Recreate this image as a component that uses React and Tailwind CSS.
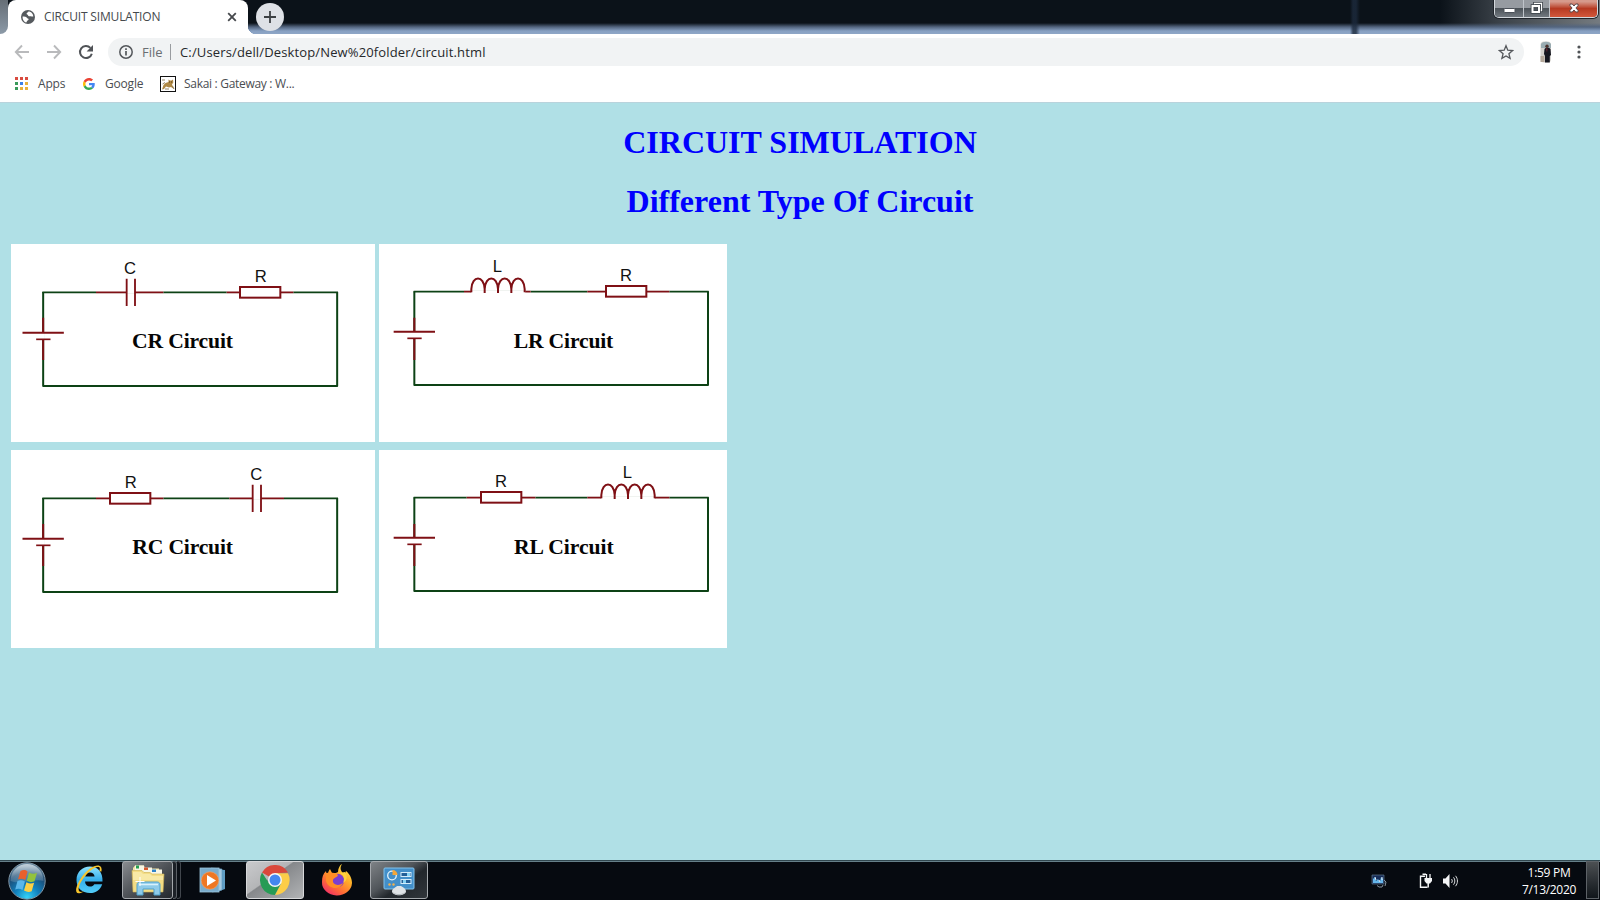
import React from "react";

const WIRE = "#0d4215";
const PART = "#7f1015";

function Frame({ x, top, bottom, right }) {
  return (
    <path d={`M${x} ${top}V${bottom}H${right}V${top}`} fill="none" stroke={WIRE} strokeWidth="6" strokeLinejoin="round" />
  );
}

function Battery({ x, y, top, end }) {
  return (
    <g stroke={PART} fill="none">
      <path d={`M${x} ${y}V${y + 20}`} stroke="#fff" strokeWidth="10" />
      <path d={`M${x} ${top}V${y}M${x} ${y + 20}V${end}`} strokeWidth="6" />
      <path d={`M${x - 62} ${y}H${x + 62}`} strokeWidth="6" />
      <path d={`M${x - 21} ${y + 20}H${x + 22}`} strokeWidth="5" />
    </g>
  );
}

function TopWire({ y, from, to, parts }) {
  return (
    <g fill="none" strokeWidth="5.5">
      <path d={`M${from} ${y}H${to}`} stroke={WIRE} />
      {parts.map(([a, b, c, d]) => (
        <g key={a}>
          <path d={`M${a} ${y}H${d}`} stroke="#fff" strokeWidth="9" />
          <path d={`M${a} ${y}H${b}M${c} ${y}H${d}`} stroke={PART} />
        </g>
      ))}
    </g>
  );
}

function Resistor({ x, y }) {
  return <rect x={x} y={y} width="121" height="32" fill="#fff" stroke={PART} strokeWidth="6" />;
}

function Capacitor({ x, y }) {
  return <path d={`M${x} ${y}v82M${x + 25} ${y}v82`} stroke={PART} strokeWidth="5.5" fill="none" />;
}

function Coil({ x, y }) {
  return (
    <path
      d={`M${x} ${y + 2}v-10c2-42 38-42 40 0v12v-12c2-42 38-42 40 0v12v-12c2-42 38-42 40 0v12v-12c2-42 38-42 40 0v10`}
      stroke={PART}
      strokeWidth="6"
      fill="none"
    />
  );
}

function Name({ x, y, children }) {
  return (
    <text x={x} y={y} textAnchor="middle" fontSize="50" fill="#111" className="font-['Liberation_Sans',Arial,sans-serif]">
      {children}
    </text>
  );
}

function Caption({ x, y, length, children }) {
  return (
    <text
      x={x}
      y={y}
      fontSize="65"
      fontWeight="700"
      textLength={length}
      fill="#050505"
      className="font-['Liberation_Serif','Times_New_Roman',serif]"
    >
      {children}
    </text>
  );
}

function Circuits() {
  return (
    <div className="flex w-[716px] flex-wrap gap-x-[4px] gap-y-[8px]">
      <svg width="364" height="198" viewBox="33 27 1092 594" className="block bg-white">
        <Frame x={129.5} top={171} bottom={453} right={1011.5} />
        <TopWire y={172} from={127} to={1014} parts={[[288, 380, 405, 490], [680, 720, 841, 880]]} />
        <Battery x={129.5} y={293} top={248} end={375} />
        <Capacitor x={380} y={131} />
        <Resistor x={720} y={156} />
        <Name x={390} y={117}>C</Name>
        <Name x={782} y={142}>R</Name>
        <Caption x={396} y={340} length={303}>CR Circuit</Caption>
      </svg>
      <svg width="348" height="198" viewBox="27 27 1044 594" className="block bg-white">
        <Frame x={133} top={169} bottom={450} right={1014} />
        <TopWire y={170} from={131} to={1016} parts={[[282, 304, 466, 482], [652, 708, 828, 898]]} />
        <Battery x={133} y={290} top={248} end={375} />
        <Coil x={304} y={170} />
        <Resistor x={708} y={153} />
        <Name x={382} y={110}>L</Name>
        <Name x={768} y={139}>R</Name>
        <Caption x={431} y={340} length={299}>LR Circuit</Caption>
      </svg>
      <svg width="364" height="198" viewBox="33 30 1092 594" className="block bg-white">
        <Frame x={129.5} top={174} bottom={456} right={1011.5} />
        <TopWire y={175} from={127} to={1014} parts={[[288, 330, 451, 490], [688, 758, 783, 852]]} />
        <Battery x={129.5} y={296} top={252} end={378} />
        <Resistor x={330} y={159} />
        <Capacitor x={758} y={134} />
        <Name x={392} y={145}>R</Name>
        <Name x={769} y={120}>C</Name>
        <Caption x={397} y={343} length={302}>RC Circuit</Caption>
      </svg>
      <svg width="348" height="198" viewBox="27 30 1044 594" className="block bg-white">
        <Frame x={133} top={172} bottom={453} right={1014} />
        <TopWire y={173} from={131} to={1016} parts={[[290, 333, 454, 496], [652, 694, 854, 898]]} />
        <Battery x={133} y={293} top={252} end={378} />
        <Resistor x={333} y={156} />
        <Coil x={694} y={173} />
        <Name x={393} y={142}>R</Name>
        <Name x={772} y={113}>L</Name>
        <Caption x={432} y={343} length={299}>RL Circuit</Caption>
      </svg>
    </div>
  );
}

function WindowControls() {
  return (
    <div className="mr-[2px] flex h-[18px] w-[104px] overflow-hidden rounded-b-[5px] border border-t-0 border-[#d3d8dd] shadow-[0_0_0_1px_#20252b]">
      <div className="flex w-[29px] items-center justify-center border-r border-[#bfc4ca] bg-linear-to-b from-[#969ba1] from-45% via-[#4c5359] via-50% to-[#727980]">
        <svg width="13" height="18" viewBox="0 0 13 18">
          <rect x="1" y="8.500" width="11" height="4" rx="0.500" fill="#fff" stroke="#4a5058" strokeWidth="1" />
        </svg>
      </div>
      <div className="flex w-[26px] items-center justify-center border-r border-[#bfc4ca] bg-linear-to-b from-[#969ba1] from-45% via-[#4c5359] via-50% to-[#727980]">
        <svg width="14" height="18" viewBox="0 0 14 18" fill="none">
          <path d="M4.500 5V3.500h7v7H10" stroke="#3f464d" strokeWidth="3" />
          <path d="M4.500 5V3.500h7v7H10" stroke="#fff" strokeWidth="1.300" />
          <rect x="2.500" y="6" width="6.500" height="6" stroke="#3f464d" strokeWidth="3.600" />
          <rect x="2.500" y="6" width="6.500" height="6" stroke="#fff" strokeWidth="2" />
        </svg>
      </div>
      <div className="flex flex-1 items-center justify-center bg-linear-to-b from-[#d69a8c] from-10% via-[#b63a22] via-50% to-[#d2573b]">
        <svg width="14" height="18" viewBox="0 0 14 18" fill="none">
          <path d="M3 4h2.300l1.700 2 1.700-2H11v1.700L8.900 8l2.100 2.300V12H8.700L7 10l-1.700 2H3v-1.700L5.100 8 3 5.700z" fill="#fff" stroke="#5b4a4c" strokeWidth="1" />
        </svg>
      </div>
    </div>
  );
}

function TabStrip() {
  return (
    <div className="flex h-[34px] items-start bg-[linear-gradient(to_right,transparent_1350px,#1c2a3dcc_1353px,#1c2a3dcc_1356px,transparent_1360px),linear-gradient(to_bottom,transparent_23px,#53657f_27px,#87a0c2_31px,#8ea6c6_34px),linear-gradient(to_right,#0b1219_1440px,#3b4249_1500px,#757b80_1600px)]">
      <div className="h-[34px] w-[8px] bg-white">
        <div className="h-full w-full rounded-br-[8px] bg-linear-to-b from-[#666e76] to-[#8c9aa8]" />
      </div>
      <div className="flex h-[34px] w-[240px] items-center rounded-t-[8px] bg-white pl-[13px] pr-[9px]">
        <svg width="14" height="14" viewBox="0 0 14 14" className="shrink-0">
          <circle cx="7" cy="7" r="7" fill="#565a5e" />
          <path d="M1.600 6.500c1.800.1 3.700.1 4.200 1.300.4 1 1.900.5 1.800 1.700-.1 1-1.600.8-1.800 2-.1.700-.4 1-1 .900C2.500 11.600 1.300 9 1.600 6.500z" fill="#fff" />
          <path d="M7.400 1.500c-.2 1.200-1.800 1-1.800 2.200 0 .9 1.200.5 1.300 1.400.2 1.100 1.300 1.400 2.500 1.100 1-.2 1.600.5 2.900.3C12.200 3.800 10 1.500 7.400 1.500z" fill="#fff" />
        </svg>
        <span className="ml-[9px] flex-1 whitespace-nowrap text-[12px] leading-[16px] tracking-[-0.170px] text-[#45494d]">
          CIRCUIT SIMULATION
        </span>
        <svg width="14" height="14" viewBox="0 0 14 14">
          <path d="M3.200 3.200l7.600 7.600M10.800 3.200l-7.600 7.600" stroke="#45484c" strokeWidth="1.800" />
        </svg>
      </div>
      <div className="h-[34px] w-[8px] bg-[radial-gradient(circle_at_100%_26px,transparent_8px,white_8.500px)] [clip-path:inset(26px_0_0_0)]" />
      <div className="mt-[3px] flex h-[28px] w-[28px] items-center justify-center rounded-full bg-[#dee1e6]">
        <svg width="12" height="12" viewBox="0 0 12 12">
          <path d="M6 0v12M0 6h12" stroke="#3c4043" strokeWidth="1.800" />
        </svg>
      </div>
      <div className="flex-1" />
      <WindowControls />
    </div>
  );
}

function Toolbar() {
  return (
    <div className="flex h-[36px] items-center bg-white pl-[14px]">
      <svg width="16" height="16" viewBox="0 0 16 16" fill="none" stroke="#b9babc" strokeWidth="1.900">
        <path d="M15 8H2M8 1.500L1.800 8 8 14.500" />
      </svg>
      <svg width="16" height="16" viewBox="0 0 16 16" fill="none" stroke="#b9babc" strokeWidth="1.900" className="ml-[16px]">
        <path d="M1 8h13M8 1.500L14.200 8 8 14.500" />
      </svg>
      <svg width="16" height="16" viewBox="0 0 16 16" className="ml-[16px]">
        <path d="M13.800 9.700A6 6 0 1 1 12.400 3.900" fill="none" stroke="#505357" strokeWidth="2" />
        <path d="M15 1v6.400H8.600z" fill="#505357" />
      </svg>
      <div className="ml-[14px] flex h-[28px] w-[1416px] items-center rounded-full bg-[#f1f3f4] pl-[11px] pr-[10px]">
        <svg width="14" height="14" viewBox="0 0 14 14">
          <circle cx="7" cy="7" r="6.200" fill="none" stroke="#54575b" strokeWidth="1.500" />
          <path d="M7 6v4.500M7 3.300v1.600" stroke="#54575b" strokeWidth="1.700" />
        </svg>
        <span className="ml-[9px] w-[22px] whitespace-nowrap text-[13px] leading-[18px] text-[#6a6e72]">File</span>
        <span className="ml-[6px] h-[16px] w-px bg-[#999ca0]" />
        <span className="ml-[9px] flex-1 whitespace-nowrap text-[13px] leading-[18px] tracking-[0.140px] text-[#26282b]">
          C:/Users/dell/Desktop/New%20folder/circuit.html
        </span>
        <svg width="16" height="16" viewBox="0 0 16 16">
          <path
            d="M8 1.700l1.800 4.500 4.800.4-3.700 3.100 1.200 4.700L8 11.900l-4.100 2.500 1.200-4.700L1.400 6.600l4.800-.4z"
            fill="none"
            stroke="#55585c"
            strokeWidth="1.300"
          />
        </svg>
      </div>
      <svg width="12" height="22" viewBox="0 0 12 22" className="ml-[16px]">
        <rect x="0.500" y="0.500" width="10.500" height="21" rx="3.500" fill="#d5d3cf" />
        <path d="M1 3c2-3 8-3 10 0v4H1z" fill="#9aacb2" />
        <path d="M0.500 15h4v6h-4z" fill="#b5a99b" />
        <circle cx="7" cy="5.200" r="1.700" fill="#4c342e" />
        <path d="M4.500 8c1-1.800 5-1.800 6 0l.5 6-1.200 1v6.500H5V15l-1-2z" fill="#15161f" />
        <path d="M6 7.500h1.500l-.5 4z" fill="#7b2634" />
      </svg>
      <svg width="4" height="14" viewBox="0 0 4 14" className="ml-[25px]" fill="#505357">
        <circle cx="2" cy="2" r="1.600" />
        <circle cx="2" cy="7" r="1.600" />
        <circle cx="2" cy="12" r="1.600" />
      </svg>
    </div>
  );
}

function Bookmarks() {
  const dots = ["#d94b40", "#d94b40", "#d94b40", "#3a9a5a", "#3c80e8", "#e9b13a", "#3a9a5a", "#e9b13a", "#e9b13a"];
  return (
    <div className="flex h-[33px] items-start border-b border-[#b9d3dc] bg-white pl-[15px] pt-[5px] text-[12px] leading-[18px] text-[#4a4d51]">
      <div className="mt-[2px] grid grid-cols-[3px_3px_3px] gap-[2px]">
        {dots.map((c, i) => (
          <span key={i} className="h-[3px] w-[3px]" style={{ backgroundColor: c }} />
        ))}
      </div>
      <span className="ml-[10px] w-[28px] whitespace-nowrap tracking-[-0.200px]">Apps</span>
      <svg width="12" height="12" viewBox="0 0 48 48" className="ml-[17px] mt-[3px]">
        <path fill="#EA4335" d="M24 9.500c3.540 0 6.710 1.220 9.210 3.600l6.850-6.850C35.900 2.380 30.470 0 24 0 14.620 0 6.510 5.380 2.560 13.220l7.980 6.190C12.430 13.720 17.740 9.500 24 9.500z" />
        <path fill="#4285F4" d="M46.980 24.550c0-1.570-.15-3.090-.38-4.550H24v9.020h12.940c-.58 2.960-2.260 5.480-4.780 7.180l7.730 6c4.510-4.180 7.090-10.360 7.090-17.650z" />
        <path fill="#FBBC05" d="M10.530 28.590c-.48-1.450-.76-2.990-.76-4.590s.27-3.140.76-4.590l-7.980-6.190C.92 16.460 0 20.120 0 24s.92 7.540 2.560 10.780l7.970-6.190z" />
        <path fill="#34A853" d="M24 48c6.480 0 11.930-2.130 15.890-5.810l-7.730-6c-2.150 1.450-4.920 2.300-8.160 2.300-6.260 0-11.570-4.220-13.470-9.910l-7.980 6.190C6.510 42.620 14.620 48 24 48z" />
      </svg>
      <span className="ml-[10px] w-[39px] whitespace-nowrap tracking-[-0.200px]">Google</span>
      <svg width="16" height="16" viewBox="0 0 16 16" className="ml-[16px] mt-px">
        <rect x="0.500" y="0.500" width="15" height="15" fill="#fff" stroke="#111" />
        <path d="M2 13.500l1.500-4.500 2-2 3-1V3.500l1.500 1h1.500l1.500-1 .3 3-1.300 2 2 4.500-3-2-2 .5-3-1-2 2.500z" fill="#b08a46" />
        <path d="M2 4h3M2.500 8l2.500-1.500M12.500 10l1.500 3M5 13h4" stroke="#8a7a5a" strokeWidth="0.900" />
        <path d="M9 6h1M11 6h1" stroke="#5b3f1c" strokeWidth="1" />
      </svg>
      <span className="ml-[8px] whitespace-nowrap tracking-[-0.300px]">Sakai : Gateway : W...</span>
    </div>
  );
}

function Orb() {
  return (
    <svg width="38" height="38" viewBox="0 0 38 38" className="block">
      <defs>
        <radialGradient id="orb" cx="50%" cy="95%" r="85%">
          <stop offset="0" stopColor="#35d3f7" />
          <stop offset="0.400" stopColor="#1180bd" />
          <stop offset="0.800" stopColor="#1d4a72" />
          <stop offset="1" stopColor="#5f8098" />
        </radialGradient>
        <linearGradient id="shine" x1="0" y1="0" x2="0" y2="1">
          <stop offset="0" stopColor="#e6edf2" stopOpacity="0.750" />
          <stop offset="1" stopColor="#9cb6c8" stopOpacity="0.250" />
        </linearGradient>
      </defs>
      <circle cx="19" cy="19" r="18.200" fill="url(#orb)" stroke="#8196a5" />
      <path d="M2.500 19a16.500 17 0 0 1 33 0C27 16 12 23 2.500 19z" fill="url(#shine)" />
      <path d="M12.500 9c3-1.600 5-1 7 .4L17.300 18c-2.500-1.500-4.600-1.700-7.300-.6z" fill="#e9602c" />
      <path d="M21 10.500c3 1.500 5.200 1.500 8 .3L26.500 19.300c-2.800 1.200-5 .7-7.700-.6z" fill="#93c23d" />
      <path d="M9.500 19c2.800-1.200 5-.8 7.400.6l-2.400 8.400c-2.400-1.600-4.600-1.700-7.300-.6z" fill="#5bb7ea" />
      <path d="M18.400 20.200c2.800 1.500 5 1.700 7.700.5l-2.400 8.500c-2.700 1.200-5 .8-7.700-.6z" fill="#fcd044" />
    </svg>
  );
}

function Explorer() {
  return (
    <svg width="34" height="32" viewBox="0 0 34 32" className="block">
      <path d="M4 1.500h9l1 3h14v8H2V4z" fill="#f4e6a6" />
      <path d="M4 1.500h9v5H4z" fill="#f8f6e5" />
      <rect x="5" y="1.500" width="3" height="3" fill="#24a052" />
      <path d="M11 3.500h10v5H11z" fill="#f8f6e5" />
      <rect x="13" y="3.500" width="4" height="2.500" fill="#d4572f" />
      <path d="M19 5.500h12v5H19z" fill="#f8f6e5" />
      <rect x="21" y="5.500" width="4" height="2.500" fill="#2f83ca" />
      <path d="M1 6.500h10l2 2h6l2 1.500h12l-1 18H2z" fill="#f3dc84" stroke="#ceb457" strokeWidth="0.600" />
      <path d="M2 8h8l2 2h7l2 2h11v4H2z" fill="#f8e9a6" />
      <path d="M6 31V21c0-2 1-3 3-3h17c2 0 3 1 3 3v10h-6v-6H12v6z" fill="#8ecbe9" stroke="#4f9fc9" />
      <path d="M8 20.500h19" stroke="#d8f1fc" strokeWidth="1.500" />
      <path d="M9 13v9M4.500 17.500h9" stroke="#fff" strokeWidth="1" />
    </svg>
  );
}

function Taskbar() {
  return (
    <div className="flex h-[40px] shrink-0 items-start border-t border-[#30474f] bg-[#060a10] shadow-[inset_0_1px_0_#66808a]">
      <div className="ml-[8px] mt-px h-[38px] w-[38px]">
        <Orb />
      </div>
      <svg width="30" height="32" viewBox="0 0 30 32" className="ml-[27px] mt-[2px] block">
        <defs>
          <linearGradient id="ie" x1="0" y1="0" x2="0" y2="1">
            <stop offset="0" stopColor="#8fe3ff" />
            <stop offset="0.500" stopColor="#35aeea" />
            <stop offset="1" stopColor="#52ccf8" />
          </linearGradient>
        </defs>
        <path
          fillRule="evenodd"
          fill="url(#ie)"
          d="M29.500 18.500H12c.3 3.200 2.300 5 5 5 2 0 3.500-.8 4.300-2.300h7.900C27.300 26.800 23 30 17 30 9 30 3.500 25 3.500 17S9.300 3.500 17 3.500c7.800 0 13 5.800 12.500 15zM12.200 13.500h9.400C21.200 11 19.500 9.500 17 9.500s-4.400 1.500-4.800 4z"
        />
        <path
          d="M28.500 8.500c.5-3-.2-5.500-2.800-6-4-.8-11.500 3.500-17 11.500C2.500 23 1 31 6.500 30.200c1.500-.2 3-1 4.500-2-2.500 1-4.700 1-5.200-.6-1.200-3.800 3-11.600 8.600-17.200C20 5 24.500 3.500 26.200 4.300c1 .6.700 2.200.2 4z"
          fill="#f7c52d"
        />
      </svg>
      <div className="ml-[19px] flex h-[38px] w-[51px] items-center justify-center rounded-[3px] border border-[#a4a8ac] bg-linear-to-br from-[#898c90] via-[#4e5257] to-[#24282d]">
        <Explorer />
      </div>
      <div className="h-[38px] w-[4px] rounded-r-[3px] border border-l-0 border-[#5b6066] bg-[#1c2127]" />
      <div className="h-[38px] w-[4px] rounded-r-[3px] border border-l-0 border-[#41464c] bg-[#0b1016]" />
      <svg width="27" height="27" viewBox="0 0 27 27" className="ml-[18px] mt-[6px] block">
        <path d="M15 2l11 1v19l-8 3z" fill="#5f9dc3" />
        <path d="M12 1l11 1v21l-10 2z" fill="#a6cbe1" stroke="#5a94b9" strokeWidth="0.600" />
        <rect x="1" y="1" width="19" height="24" fill="#7aaccb" stroke="#9cc6dd" strokeWidth="0.800" />
        <circle cx="11" cy="13.500" r="8.700" fill="#ee7723" stroke="#f4a66b" strokeWidth="0.600" />
        <path d="M8 8l9 5.500L8 19z" fill="#fff" />
      </svg>
      <div className="ml-[20px] flex h-[38px] w-[58px] items-center justify-center rounded-[3px] border border-[#d7d8da] bg-[linear-gradient(145deg,#c9cacc_0%,#b4b5b7_42%,#86888b_44%,#b1b3b5_100%)]">
        <svg width="30" height="30" viewBox="0 0 30 30" className="block">
          <path d="M15 15L2 7.500A15 15 0 0 1 28 7.500L15 8.200z" fill="#d9483b" />
          <path d="M15 8.200h13A15 15 0 0 1 15 30l6-11.500z" fill="#fccd48" />
          <path d="M2 7.500A15 15 0 0 0 14.800 30l6.100-11.600L9.200 18.400z" fill="#279b55" />
          <circle cx="15" cy="15" r="7" fill="#f4f5f6" />
          <circle cx="15" cy="15" r="5.500" fill="#4387ef" />
        </svg>
      </div>
      <svg width="32" height="32" viewBox="0 0 32 32" className="ml-[17px] mt-[3px] block">
        <defs>
          <linearGradient id="fox" x1="0.900" y1="0" x2="0.200" y2="1">
            <stop offset="0" stopColor="#fff04c" />
            <stop offset="0.400" stopColor="#ffab27" />
            <stop offset="0.700" stopColor="#ff6d35" />
            <stop offset="1" stopColor="#f12a6b" />
          </linearGradient>
        </defs>
        <path
          d="M21 0c-2 3-2 6 1 9 1 1 1 2 1 3l2-5c5 4 6 9 6 12a15 13 0 0 1-30-1C1 13 2 10 5 7c0 2 1 3 2 3 0-2 1-4 2-5l2 4c3 0 5 0 6-1 0-4 2-7 4-8z"
          fill="url(#fox)"
        />
        <circle cx="16.500" cy="16.500" r="6.800" fill="#7b3fd0" />
        <path d="M5 9c4 0 9-1 12 2-1 3-4 2-5 5-1 4 5 7 10 3-3 8-15 6-17-2z" fill="#ff8d26" />
        <path d="M18 9c5 1 6 6 4 10 4-2 5-7 2-11z" fill="#ffd23c" />
      </svg>
      <div className="ml-[17px] flex h-[38px] w-[58px] items-center justify-center rounded-[3px] border border-[#a4a8ac] bg-[linear-gradient(145deg,#7e8286_0%,#50555a_42%,#22272c_60%,#31363b_100%)]">
        <svg width="32" height="29" viewBox="0 0 32 29" className="mt-[3px] block">
          <rect x="1" y="1" width="30" height="21" rx="1" fill="#438fc9" stroke="#84c2ea" />
          <circle cx="9" cy="8.500" r="4.300" fill="#438fc9" stroke="#e3f2fb" strokeWidth="1.300" />
          <path d="M9.500 8V3a5 5 0 0 1 5 5z" fill="#f5a638" />
          <rect x="18" y="5.500" width="10" height="4" fill="#235f98" stroke="#d5ecfa" />
          <rect x="18" y="12.500" width="10" height="4" fill="#235f98" stroke="#d5ecfa" />
          <path d="M24 6h3v3h-3zM20 13h3v3h-3z" fill="#87d2f4" />
          <circle cx="6.500" cy="17.500" r="1.200" fill="#f5b04a" />
          <circle cx="10.500" cy="17.500" r="1.200" fill="#f5b04a" />
          <path d="M9 24.500c0-3 4-4 5-5.500h4c2 1.500 5 2.500 5 5.500-1 5-13 5-14 0z" fill="#dfe3e6" />
          <path d="M10 25c3 3 9 3 12 0-2 4-10 4-12 0z" fill="#a2a9ae" />
        </svg>
      </div>
      <div className="flex-1" />
      <svg width="16" height="14" viewBox="0 0 16 14" className="mt-[13px] block">
        <path d="M1 1h12v9H1z" fill="#162c57" stroke="#60758c" strokeWidth="0.700" />
        <path d="M2 9V5l2-2 1 4 2-2 2 3 1-5 2 2v4z" fill="#65b6ea" />
        <path d="M4 3l1 3M8 6l1 2M11 3v3" stroke="#e5f1fa" strokeWidth="1" />
        <path d="M6 11.500l2 1.500h3l1-2M13 6l2 2-1 4" stroke="#87939e" fill="none" />
      </svg>
      <svg width="14" height="16" viewBox="0 0 14 16" className="ml-[32px] mt-[12px] block">
        <path d="M3.500 1.300H7M8.500 14.200h-7V3.200H6" fill="none" stroke="#f4f5f6" strokeWidth="1.400" />
        <path d="M7.500 1v4M11 1v4" stroke="#f4f5f6" strokeWidth="1.300" />
        <path d="M5.500 5h7.500v3l-2 2.500H7.500L5.500 8z" fill="#f4f5f6" />
        <path d="M9.200 10v4.500" stroke="#f4f5f6" strokeWidth="1.500" />
      </svg>
      <svg width="15" height="14" viewBox="0 0 15 14" className="ml-[10px] mt-[13px] block">
        <path d="M0 4.500h2.500L6.500 0v14L2.500 9.500H0z" fill="#f4f5f6" />
        <path d="M8.500 5c1 1.200 1 2.800 0 4M10.500 3.300c1.800 2.100 1.800 5.300 0 7.400M12.500 1.800c2.600 3 2.600 7.400 0 10.400" fill="none" stroke="#d6d9db" strokeWidth="1" />
      </svg>
      <div className="ml-[56px] flex w-[70px] flex-col items-center pt-[3px] text-[12px] leading-[17px] tracking-[-0.300px] text-white">
        <span className="whitespace-nowrap">1:59 PM</span>
        <span className="whitespace-nowrap">7/13/2020</span>
      </div>
      <div className="ml-[2px] h-[38px] w-[13px] border border-[#5d6267] bg-linear-to-b from-[#4c5053] to-[#11161b]" />
      <div className="w-px" />
    </div>
  );
}

export default function App() {
  return (
    <div className="flex h-[900px] w-[1600px] flex-col overflow-hidden bg-[#b0e0e6] font-['Open_Sans','Noto_Sans',sans-serif]">
      <TabStrip />
      <Toolbar />
      <Bookmarks />
      <main className="min-h-0 flex-1 bg-[#b0e0e6] pl-[11px] pt-[21px]">
        <div className="mr-[11px] text-center font-['Liberation_Serif','Times_New_Roman',serif] text-[32px] font-bold leading-[37px] text-[#0000ff]">
          <h1>CIRCUIT SIMULATION</h1>
          <h1 className="mt-[22px]">Different Type Of Circuit</h1>
        </div>
        <div className="mt-[24px]">
          <Circuits />
        </div>
      </main>
      <Taskbar />
    </div>
  );
}
